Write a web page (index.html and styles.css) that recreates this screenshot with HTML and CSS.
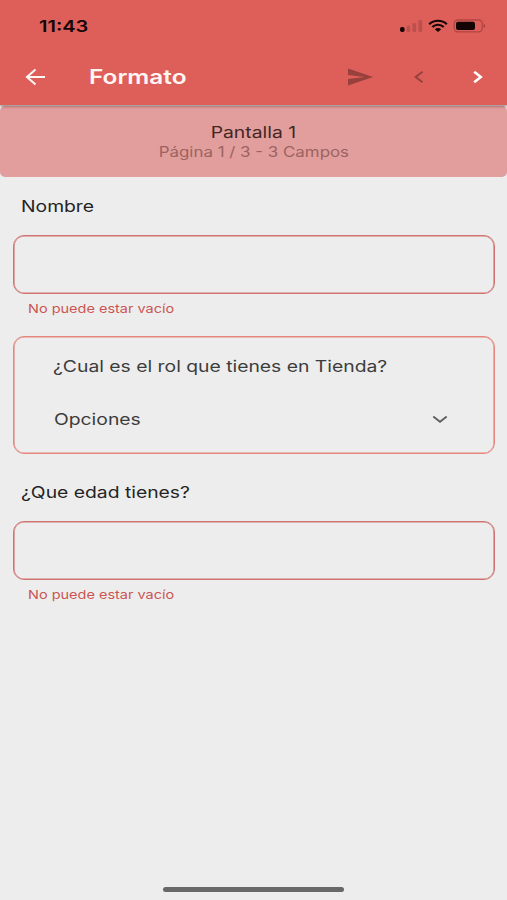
FILE: index.html
```html
<!DOCTYPE html>
<html lang="es">
    <head>
        <title>Formato</title>
        <meta charset="UTF-8">
        <meta name="viewport" content="width=device-width, initial-scale=1.0">
        <link rel="stylesheet" href="styles.css">
    </head>

    <body>

        <header>
            <div class="estado">
                <span class="texto hora">11:43</span>
                <svg class="iconos" width="88" height="16" viewBox="0 0 88 16">
                    <rect x="1" y="9" width="4.6" height="5" rx="2" fill="#140404"/>
                    <g fill="#bd504c">
                        <rect x="7.6" y="7.5" width="3.6" height="6.5" rx="1.5"/>
                        <rect x="13.4" y="5" width="3.8" height="9" rx="1.5"/>
                        <rect x="19.4" y="2" width="3.8" height="12" rx="1.5"/>
                    </g>
                    <g fill="none" stroke="#140404" stroke-width="2.2">
                        <path d="M30.2 6.2C35 1.6 43 1.6 47.8 6.2"/>
                        <path d="M33.3 9C36.6 6 41.4 6 44.7 9"/>
                    </g>
                    <path d="M35.8 11.2C37.8 9.6 40.2 9.6 42.2 11.2L39 14Z" fill="#140404"/>
                    <rect x="55.2" y="2" width="28" height="11.8" rx="3.5" fill="none" stroke="#b14542" stroke-width="1.3"/>
                    <rect x="57" y="3.8" width="19" height="8.2" rx="2" fill="#140404"/>
                    <path d="M84.6 5.5Q88 7.8 84.6 10.2Z" fill="#a83f3c"/>
                </svg>
            </div>
            <div class="barra">
                <svg class="volver" width="22" height="18" viewBox="0 0 22 18">
                    <path d="M20 9H2M10.5 1.5L2 9L10.5 16.5" fill="none" stroke="#fff5f3" stroke-width="2.1"/>
                </svg>
                <h1><span class="texto">Formato</span></h1>
                <svg class="enviar" width="25" height="18" viewBox="0 0 25 18">
                    <path d="M0 0.5L25 9L0 17.5V11L17 9L0 7Z" fill="#97403c"/>
                </svg>
                <svg class="anterior" width="12" height="14" viewBox="0 0 12 14">
                    <path d="M9.5 1.8L2.7 7L9.5 12.2" fill="none" stroke="#97403c" stroke-width="2"/>
                </svg>
                <svg class="siguiente" width="12" height="14" viewBox="0 0 12 14">
                    <path d="M2.2 1.8L8.8 7L2.2 12.2" fill="none" stroke="#fff" stroke-width="2.5"/>
                </svg>
            </div>
        </header>

        <div class="pantalla">
            <span class="texto nombre-pantalla">Pantalla 1</span>
            <span class="texto pagina">Página 1 / 3 - 3 Campos</span>
        </div>

        <form>
            <label for="nombre"><span class="texto">Nombre</span></label>
            <input id="nombre" type="text">
            <div class="error"><span class="texto">No puede estar vacío</span></div>

            <div class="seleccion">
                <span class="texto pregunta">¿Cual es el rol que tienes en Tienda?</span>
                <div class="opciones">
                    <span class="texto">Opciones</span>
                    <svg width="16" height="10" viewBox="0 0 16 10">
                        <path d="M1.3 2.5L8 7.7L14.7 2.5" fill="none" stroke="#606060" stroke-width="1.9"/>
                    </svg>
                </div>
            </div>

            <label for="edad"><span class="texto">¿Que edad tienes?</span></label>
            <input id="edad" type="text">
            <div class="error"><span class="texto">No puede estar vacío</span></div>
        </form>

        <div class="inicio"></div>

    </body>
</html>
```

FILE: styles.css
```css
* { box-sizing: border-box; }

body {
    display: flex;
    flex-direction: column;
    height: 900px;
    margin: 0;
    background: #ededed;
    font-family: Inter, "Liberation Sans", sans-serif;
    font-size: 16px;
    line-height: 20px;
    color: #242424;
}

svg { display: block; flex: none; }

/* letra ensanchada */
.texto {
    display: inline-block;
    white-space: nowrap;
    transform: scaleX(1.207);
    transform-origin: left center;
}

header {
    position: relative;
    height: 105px;
    background: #de5f5a;
    box-shadow: 0 1px 3px rgba(70, 30, 30, 0.6);
}

.estado {
    display: flex;
    justify-content: space-between;
    align-items: center;
    height: 52px;
    padding: 0 20px 0 39px;
}

.hora {
    font-weight: 600;
    color: #140404;
    transform: scaleX(1.25);
}

.barra {
    display: flex;
    align-items: center;
    height: 50px;
    padding: 0 23px 0 25px;
}

h1 {
    flex: 1;
    margin: 0 0 0 42px;
    font-size: 20px;
    font-weight: 600;
    color: #fff5f3;
}

h1 .texto { transform: scaleX(1.22); }

.enviar { margin-right: -1px; }
.anterior { margin-left: 41px; }
.siguiente { margin-left: 47px; }

.pantalla {
    display: flex;
    flex-direction: column;
    align-items: center;
    height: 71px;
    margin-top: 1px;
    padding-top: 16px;
    background: #e29e9c;
    border-radius: 5px;
}

.pantalla .texto { transform-origin: center; }

.nombre-pantalla { color: #432625; }

.pagina {
    font-size: 14px;
    color: #9b6361;
}

form { padding: 19px 12px 0 13px; }

label {
    display: block;
    height: 20px;
    margin-left: 8px;
}

input {
    display: block;
    width: 100%;
    height: 59px;
    margin-top: 19px;
    padding: 0 16px;
    background: none;
    border: 1px solid #d07472;
    border-radius: 11px;
    box-shadow: inset 0 0 0 0.6px #d07472;
    outline: none;
    font: inherit;
}

.error {
    height: 42px;
    padding: 5px 15px 0;
    font-size: 12px;
    color: #cb5553;
}

.seleccion {
    height: 118px;
    margin-bottom: 28px;
    padding: 19px 46px 0 39px;
    border: 1px solid #e5867f;
    border-radius: 11px;
    box-shadow: inset 0 0 0 0.6px #e5867f;
    color: #3c3c3c;
}

.opciones {
    display: flex;
    justify-content: space-between;
    align-items: center;
    margin-top: 33px;
    padding-left: 1px;
}

.inicio {
    width: 181px;
    height: 5px;
    margin: auto auto 8px 163px;
    background: #686868;
    border-radius: 3px;
}
```
